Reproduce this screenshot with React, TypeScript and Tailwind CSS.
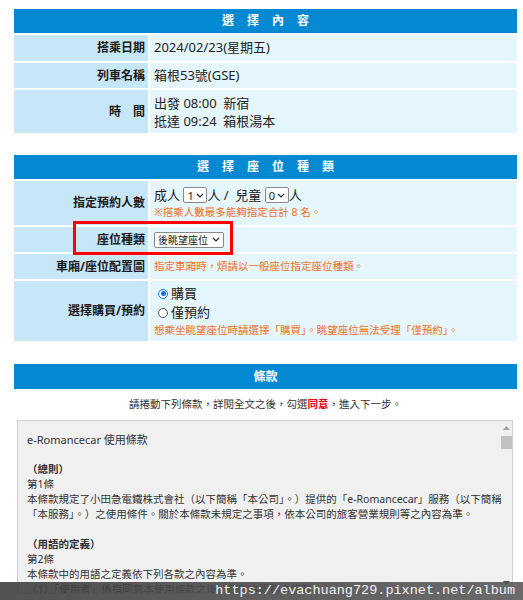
import React from "react";

const font = "font-['Noto_Sans','Noto_Sans_CJK_TC',sans-serif]";

// Spaced-out header title, like 選 擇 內 容
function SectionHeader({ chars, spaced = true }: { chars: string[]; spaced?: boolean }) {
  return (
    <div className="h-[24px] bg-[#0389d1] flex items-center justify-center text-white font-bold text-[12px]">
      <div className={spaced ? "flex gap-[13px]" : "flex"}>
        {chars.map((c, i) => (
          <span key={i}>{c}</span>
        ))}
      </div>
    </div>
  );
}

function Row({ label, h, children }: { label: string; h: string; children: React.ReactNode }) {
  return (
    <div className={`flex gap-[2px] ${h}`}>
      <div className="w-[134px] shrink-0 bg-[#c7e7f8] flex items-center justify-end pr-[3px] font-bold text-[12px] text-[#1a1a1a]">
        {label}
      </div>
      <div className="flex-1 bg-[#e5f6fd] flex flex-col justify-center pl-[4px] text-[13px] text-[#222]">
        {children}
      </div>
    </div>
  );
}

function FakeSelect({ value, w, small }: { value: string; w: string; small?: boolean }) {
  return (
    <span
      className={`inline-flex items-center justify-between h-[16px] ${w} bg-white border border-[#8a8a8a] rounded-[2px] px-[3px] ${
        small ? "text-[10px]" : "text-[11px]"
      } leading-none text-[#222] whitespace-nowrap align-middle`}
    >
      <span>{value}</span>
      <svg width="8" height="5" viewBox="0 0 8 5" className="ml-[2px] shrink-0">
        <path d="M1 1l3 3 3-3" fill="none" stroke="#222" strokeWidth="1.2" />
      </svg>
    </span>
  );
}

function Radio({ checked, label }: { checked?: boolean; label: string }) {
  return (
    <div className="flex items-center gap-[3px] pl-[4px] h-[19px]">
      {checked ? (
        <span className="w-[10px] h-[10px] rounded-full border-[1.5px] border-[#1a73e8] flex items-center justify-center bg-white">
          <span className="w-[5px] h-[5px] rounded-full bg-[#1a73e8]" />
        </span>
      ) : (
        <span className="w-[10px] h-[10px] rounded-full border border-[#555] bg-white" />
      )}
      <span className="text-[13px]">{label}</span>
    </div>
  );
}

export default function App() {
  return (
    <div className={`relative h-[600px] overflow-hidden bg-white ${font}`}>
      <div className="pt-[9px] pl-[14px] w-[517px]">
        {/* 選擇內容 */}
        <div className="flex flex-col gap-[2px]">
          <SectionHeader chars={["選", "擇", "內", "容"]} />
          <Row label="搭乘日期" h="h-[26px]">
            <span>2024/02/23(星期五)</span>
          </Row>
          <Row label="列車名稱" h="h-[25px]">
            <span>箱根53號(GSE)</span>
          </Row>
          <Row label="時　間" h="h-[43px]">
            <span className="whitespace-pre leading-[18px]">出發 08:00  新宿</span>
            <span className="whitespace-pre leading-[18px]">抵達 09:24  箱根湯本</span>
          </Row>
        </div>

        {/* 選擇座位種類 */}
        <div className="relative mt-[22px] flex flex-col gap-[2px]">
          <SectionHeader chars={["選", "擇", "座", "位", "種", "類"]} />
          <Row label="指定預約人數" h="h-[44px]">
            <div className="flex items-center whitespace-pre leading-[18px]">
              <span>成人 </span>
              <FakeSelect value="1" w="w-[24px]" />
              <span>人 /  兒童 </span>
              <FakeSelect value="0" w="w-[24px]" />
              <span>人</span>
            </div>
            <span className="text-[10.5px] text-[#ee6f1c] leading-[16px]">※搭乘人數最多能夠指定合計 8 名。</span>
          </Row>
          <Row label="座位種類" h="h-[25px]">
            <div className="flex">
              <FakeSelect value="後眺望座位" w="w-[70px]" small />
            </div>
          </Row>
          <Row label="車廂/座位配置圖" h="h-[25px]">
            <span className="text-[10.5px] text-[#ee6f1c]">指定車廂時，煩請以一般座位指定座位種類。</span>
          </Row>
          <Row label="選擇購買/預約" h="h-[60px]">
            <Radio checked label="購買" />
            <Radio label="僅預約" />
            <span className="text-[10.5px] text-[#ee6f1c] leading-[16px]">
              想乘坐眺望座位時請選擇「購買」。眺望座位無法受理「僅預約」。
            </span>
          </Row>
          {/* annotation box */}
          <div className="absolute left-[59px] top-[66px] w-[160px] h-[34px] border-[3px] border-[#ff0000]" />
        </div>

        {/* 條款 */}
        <div className="mt-[23px]">
          <div className="h-[25px] bg-[#0389d1] flex items-center justify-center text-white font-bold text-[12px]">條款</div>
          <p className="h-[31px] flex items-center justify-center text-[10.5px] text-[#333]">
            請捲動下列條款，詳閱全文之後，勾選<span className="text-[#e60012] font-bold">同意</span>，進入下一步。
          </p>
        </div>
      </div>

      <div className="ml-[17px] w-[496px] h-[174px] border border-[#cfcfcf] bg-[#f0f0f0] flex">
        <div className="flex-1 overflow-hidden pl-[9px] pt-[11px] text-[10.5px] leading-[15px] text-[#333] whitespace-nowrap">
          <div className="text-[11px]">e-Romancecar 使用條款</div>
          <div>&nbsp;</div>
          <div className="font-bold">（總則）</div>
          <div>第1條</div>
          <div>本條款規定了小田急電鐵株式會社（以下簡稱「本公司」。）提供的「e-Romancecar」服務（以下簡稱</div>
          <div>「本服務」。）之使用條件。關於本條款未規定之事項，依本公司的旅客營業規則等之內容為準。</div>
          <div>&nbsp;</div>
          <div className="font-bold">（用語的定義）</div>
          <div>第2條</div>
          <div>本條款中的用語之定義依下列各款之內容為準。</div>
          <div>（1）「使用者」係指同意本使用條款之後，使用本服務之旅客。</div>
        </div>
        {/* scrollbar */}
        <div className="w-[11px] bg-[#f0f0f0] flex flex-col items-center pt-[5px]">
          <svg width="7" height="4" viewBox="0 0 7 4">
            <path d="M0 4L3.5 0 7 4z" fill="#a3a3a3" />
          </svg>
          <div className="mt-[6px] w-[11px] h-[13px] bg-[#c1c1c1]" />
          <div className="flex-1" />
          <svg width="7" height="4" viewBox="0 0 7 4" className="mb-[8px]">
            <path d="M0 0L3.5 4 7 0z" fill="#505050" />
          </svg>
        </div>
      </div>

      {/* watermark */}
      <div className="absolute left-0 right-0 bottom-0 h-[18px] bg-gradient-to-r from-[#3f3f3f]/90 to-[#5a5a5a]/90 flex items-center justify-end pr-[8px]">
        <span className="font-['Liberation_Mono',monospace] text-[13.5px] text-[#f2f2f2] leading-none">
          https://evachuang729.pixnet.net/album
        </span>
      </div>
    </div>
  );
}
